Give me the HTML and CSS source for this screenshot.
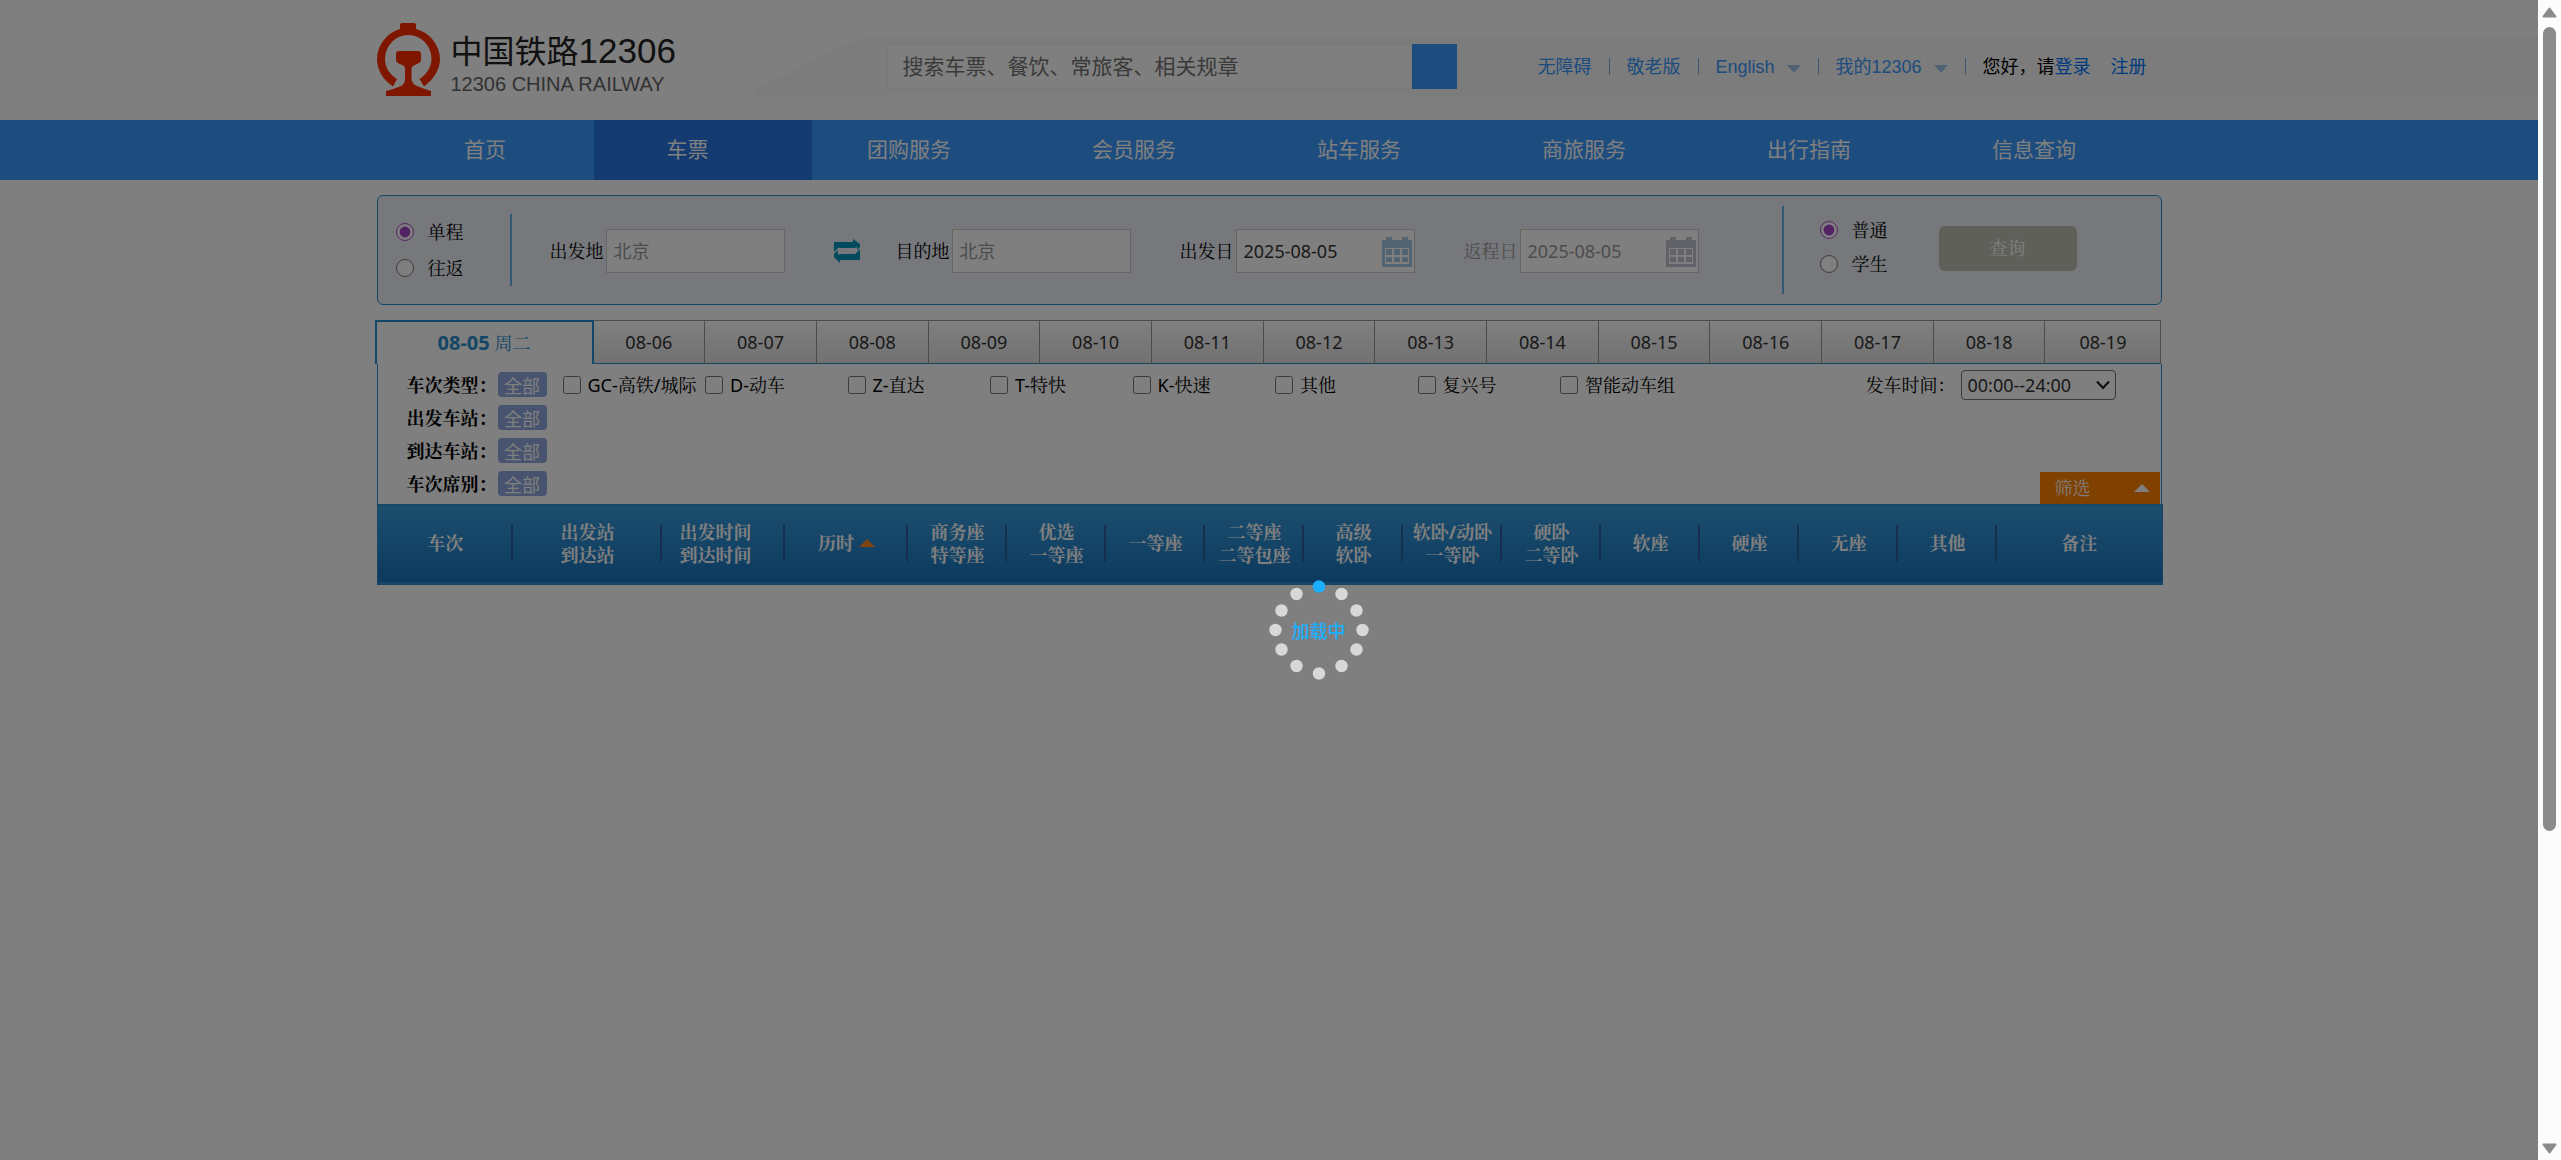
FILE: index.html
```html
<!DOCTYPE html>
<html lang="zh-CN">
<head>
<meta charset="utf-8">
<title>中国铁路12306</title>
<meta name="viewport" content="width=device-width, initial-scale=1">
<link rel="stylesheet" href="styles.css">
</head>
<body>
<div class="page">
  <header class="header">
    <svg class="header-wave" viewBox="0 0 150 60" preserveAspectRatio="none" aria-hidden="true"><path d="M150 0H138C118 0 97 4 75 17L28 42C14 48 4 50 0 58Q2 60 20 60H150Z"/></svg>
    <div class="header-band"></div>
    <div class="wrap header-row">
      <a class="logo" href="#">
        <svg class="logo-mark" viewBox="0 0 63 73" aria-hidden="true"><path d="M20 56L16 63.500C5 56 0 46 0 36A31.500 32 0 0 1 23 6V2Q23 0 25 0H37Q39 0 39 2V6A31.500 32 0 0 1 63 36C63 46 57 56 47 63.500L42.500 56C50 51 54.500 44 54.500 36A23.200 24 0 0 0 8 36C8 44 12 51 20 56ZM22 28H41Q44 28 44 31V37Q44 39 42 40L36 43Q34.500 44 34.500 46V56Q35 61 40 63Q47 66 54 68V73H9V68Q17 66 24 63Q28 61 28 56V46Q28 44 27 43L21 40Q19 39 19 37V31Q19 28 22 28Z"/></svg>
        <span class="logo-text"><span class="logo-name">中国铁路<span class="logo-num">12306</span></span><span class="logo-sub">12306 CHINA RAILWAY</span></span>
      </a>
      <form class="search">
        <input class="search-input" type="text" aria-label="搜索" placeholder="搜索车票、餐饮、常旅客、相关规章">
        <button class="search-btn" type="button" aria-label="搜索"></button>
      </form>
      <ul class="quick">
        <li><a href="#">无障碍</a></li>
        <li><a href="#">敬老版</a></li>
        <li><a href="#">English<i class="caret"></i></a></li>
        <li><a href="#">我的12306<i class="caret"></i></a></li>
        <li class="hello">您好，请<a class="login" href="#">登录</a><a class="login reg" href="#">注册</a></li>
      </ul>
    </div>
  </header>

  <nav class="nav">
    <div class="wrap nav-list">
      <a class="nav-home" href="#">首页</a>
      <a class="active" href="#">车票</a>
      <a href="#">团购服务</a>
      <a href="#">会员服务</a>
      <a href="#">站车服务</a>
      <a href="#">商旅服务</a>
      <a href="#">出行指南</a>
      <a href="#">信息查询</a>
    </div>
  </nav>

  <main class="wrap main">
    <form class="query">
      <div class="trip">
        <label><input type="radio" name="trip" checked>单程</label>
        <label><input type="radio" name="trip">往返</label>
      </div>
      <div class="fields">
        <div class="pair">
          <label class="field">出发地<input type="text" placeholder="北京"></label>
          <button class="swap" type="button" aria-label="交换出发地和目的地">
            <svg viewBox="0 0 26 24" aria-hidden="true"><path fill-rule="evenodd" d="M0 3H19V0L26 5V21H6V24L0 18ZM4 9V16L6 15H21L23 13V8L21 9Z"/><path class="gap" d="M0 13L5 8V10L0 15ZM26 10L21 15V13L26 8Z"/></svg>
          </button>
          <label class="field">目的地<input type="text" placeholder="北京"></label>
        </div>
        <label class="field date">出发日<input type="text" value="2025-08-05">
          <svg class="cal" viewBox="0 0 30 30" aria-hidden="true"><path fill-rule="evenodd" d="M0 3H4V0H10V3H20V0H26V3H30V30H0ZM3 11V27H27V11ZM4 12H10V18H4ZM12 12H18V18H12ZM20 12H26V18H20ZM4 20H10V25H4ZM12 20H18V25H12ZM20 20H26V25H20Z"/></svg>
        </label>
        <label class="field date off">返程日<input type="text" value="2025-08-05">
          <svg class="cal" viewBox="0 0 30 30" aria-hidden="true"><path fill-rule="evenodd" d="M0 3H4V0H10V3H20V0H26V3H30V30H0ZM3 11V27H27V11ZM4 12H10V18H4ZM12 12H18V18H12ZM20 12H26V18H20ZM4 20H10V25H4ZM12 20H18V25H12ZM20 20H26V25H20Z"/></svg>
        </label>
      </div>
      <div class="kind">
        <label><input type="radio" name="kind" checked>普通</label>
        <label><input type="radio" name="kind">学生</label>
      </div>
      <button class="query-btn" type="button">查询</button>
    </form>

    <div class="dates">
      <button class="current" type="button"><b>08-05</b> 周二</button>
      <button type="button">08-06</button>
      <button type="button">08-07</button>
      <button type="button">08-08</button>
      <button type="button">08-09</button>
      <button type="button">08-10</button>
      <button type="button">08-11</button>
      <button type="button">08-12</button>
      <button type="button">08-13</button>
      <button type="button">08-14</button>
      <button type="button">08-15</button>
      <button type="button">08-16</button>
      <button type="button">08-17</button>
      <button type="button">08-18</button>
      <button type="button">08-19</button>
    </div>

    <section class="filters">
      <div class="filter-row">
        <span class="filter-name">车次类型：</span><button class="all" type="button">全部</button>
        <div class="types">
          <label><input type="checkbox">GC-高铁/城际</label>
          <label><input type="checkbox">D-动车</label>
          <label><input type="checkbox">Z-直达</label>
          <label><input type="checkbox">T-特快</label>
          <label><input type="checkbox">K-快速</label>
          <label><input type="checkbox">其他</label>
          <label><input type="checkbox">复兴号</label>
          <label><input type="checkbox">智能动车组</label>
        </div>
        <label class="depart">发车时间：<select><option>00:00--24:00</option></select></label>
      </div>
      <div class="filter-row"><span class="filter-name">出发车站：</span><button class="all" type="button">全部</button></div>
      <div class="filter-row"><span class="filter-name">到达车站：</span><button class="all" type="button">全部</button></div>
      <div class="filter-row">
        <span class="filter-name">车次席别：</span><button class="all" type="button">全部</button>
        <button class="toggle" type="button">筛选<i class="up"></i></button>
      </div>
    </section>

    <table class="trains">
      <colgroup><col class="c-no"><col class="c-station"><col class="c-time" span="2"><col class="c-seat" span="11"><col class="c-note"></colgroup>
      <thead>
        <tr>
          <th>车次</th>
          <th>出发站<br>到达站</th>
          <th class="times">出发时间<br>到达时间</th>
          <th>历时<i class="up sort"></i></th>
          <th>商务座<br>特等座</th>
          <th>优选<br>一等座</th>
          <th>一等座</th>
          <th>二等座<br>二等包座</th>
          <th>高级<br>软卧</th>
          <th>软卧/动卧<br>一等卧</th>
          <th>硬卧<br>二等卧</th>
          <th>软座</th>
          <th>硬座</th>
          <th>无座</th>
          <th>其他</th>
          <th>备注</th>
        </tr>
      </thead>
    </table>
  </main>
</div>

<aside class="scroll" aria-hidden="true">
  <svg class="arrow" viewBox="0 0 15 11"><path d="M7.500 1.500L13.500 9.500H1.500Z"/></svg>
  <div class="track"><div class="thumb"></div></div>
  <svg class="arrow" viewBox="0 0 15 11"><path d="M7.500 9.500L13.500 1.500H1.500Z"/></svg>
</aside>

<div class="mask"></div>
<div class="loading" role="status">
  <svg viewBox="0 0 100 100" aria-hidden="true">
    <circle class="on" cx="50" cy="6.500" r="6.200"/>
    <circle cx="72.500" cy="14" r="6.200"/><circle cx="87.500" cy="30.500" r="6.200"/>
    <circle cx="93.500" cy="50" r="6.200"/><circle cx="87.500" cy="69.500" r="6.200"/>
    <circle cx="72.500" cy="86" r="6.200"/><circle cx="50" cy="93.500" r="6.200"/>
    <circle cx="27.500" cy="86" r="6.200"/><circle cx="12.500" cy="69.500" r="6.200"/>
    <circle cx="6.500" cy="50" r="6.200"/><circle cx="12.500" cy="30.500" r="6.200"/>
    <circle cx="27.500" cy="14" r="6.200"/>
  </svg>
  <span>加载中</span>
</div>
</body>
</html>
```

FILE: styles.css
```css
* { box-sizing: border-box; }

body {
  margin: 0;
  display: flex;
  min-height: 100vh;
  position: relative;
  background: #fff;
  color: #000;
  font: 18px/24px "Noto Sans", "Noto Serif CJK SC", "Noto Sans CJK SC", sans-serif;
}

button, input, select { font: inherit; color: inherit; margin: 0; }
button { border: 0; padding: 0; background: none; }
a { text-decoration: none; color: inherit; }
ul { margin: 0; padding: 0; list-style: none; }

.page { flex: 1; min-width: 0; }
.wrap { max-width: 1785px; margin: 0 auto; }

/* Header */
.header {
  position: relative;
  height: 120px;
  font-family: "Liberation Sans", "Noto Sans CJK SC", sans-serif;
}
.header-wave, .header-band { position: absolute; top: 36px; height: 60px; }
.header-wave { left: calc(50% - 517px); width: 150px; fill: #f8f8f8; }
.header-band { left: calc(50% - 367px); right: 0; background: #f8f8f8; }
.header-row { position: relative; display: flex; align-items: center; height: 100%; }

.logo { display: flex; gap: 11px; width: 510px; }
.logo-mark { width: 63px; height: 73px; fill: #ff2c00; }
.logo-text { display: flex; flex-direction: column; padding-top: 10px; white-space: nowrap; }
.logo-name { font-size: 32px; line-height: 36px; color: #222; }
.logo-num { font-size: 35px; }
.logo-sub { font-size: 20px; line-height: 28px; color: #666; }

.search { display: flex; height: 45px; margin-top: 13px; }
.search-input {
  width: 525px;
  padding: 0 15px;
  border: 1px solid #f0f0f0;
  background: #fff;
  font-size: 21px;
}
.search-input::placeholder { color: #757575; }
.search-btn { width: 45px; background: #3b99fc; }

.quick { display: flex; margin: 13px 0 0 81px; color: #000; white-space: nowrap; }
.quick li { display: flex; align-items: center; }
.quick li + li::before { content: ""; width: 1px; height: 17px; margin: 0 17px; background: #79aede; }
.quick a { color: #3b99fc; }
.quick .login { color: #0077ff; }
.quick .reg { margin-left: 20px; }
.caret {
  display: inline-block;
  margin-left: 12px;
  border: 7px solid transparent;
  border-top: 8px solid #9cc3ea;
  border-bottom: 0;
}

/* Main navigation */
.nav { background: #3b99fc; font-family: "Noto Sans CJK SC", sans-serif; }
.nav-list { display: grid; grid-template-columns: 217px 218px repeat(6, 1fr); }
.nav-list a {
  padding: 0 30px 4px 0;
  font-size: 21px;
  line-height: 56px;
  text-align: center;
  color: #fff;
}
.nav-list .nav-home { padding-right: 0; }
.nav-list .active { background: #2676e3; }

/* Query form */
.main { padding-top: 15px; }
.query {
  display: flex;
  align-items: center;
  height: 110px;
  border: 1px solid #298cce;
  border-radius: 6px;
  background: #eef1f8;
  white-space: nowrap;
}
.trip, .kind { display: flex; flex-direction: column; justify-content: center; }
.trip { width: 134px; height: 72px; gap: 12px; padding-left: 18px; border-right: 2px solid #62b3e4; }
.trip label, .kind label { display: flex; align-items: center; gap: 14px; }
.kind { width: 157px; height: 88px; gap: 10px; padding: 0 0 6px 36px; border-left: 2px solid #62b3e4; }
input[type="radio"], input[type="checkbox"] { width: 18px; height: 18px; accent-color: #a844c8; }
.fields { flex: 1; display: flex; gap: 49px; padding: 2px 0 0 38px; }
.pair { display: flex; align-items: center; }
.swap { padding: 0 36px 0 49px; }
.swap svg { display: block; width: 26px; height: 24px; fill: #0094bd; }
.swap .gap { fill: #eef1f8; }
.field { display: flex; align-items: center; gap: 2px; position: relative; }
.field input {
  width: 179px;
  height: 44px;
  padding: 0 7px;
  border: 1px solid #cfcdc7;
  background: #fff;
  color: #333;
  font-family: "Noto Sans", "Noto Sans CJK SC", sans-serif;
}
.field input::placeholder { color: #999; }
.cal { position: absolute; right: 3px; top: 8px; width: 30px; height: 30px; fill: #a5c8e4; }
.off, .off input { color: #999; }
.off .cal { fill: #c2c3d0; }
.query-btn {
  width: 138px;
  height: 45px;
  margin: 0 84px 4px 0;
  border-radius: 6px;
  background: #bfc0b5;
  color: #fff;
}

/* Date tabs */
.dates {
  display: grid;
  grid-template-columns: 219px repeat(13, 1fr) 116px;
  height: 44px;
  margin: 15px 0 0 -2px;
}
.dates button {
  border-top: 1px solid #999;
  border-right: 1px solid #999;
  border-bottom: 1px solid #298cce;
  background: linear-gradient(#fff, #e3e3e3);
  color: #333;
}
.dates .current {
  border: 2px solid #298cce;
  border-bottom: 0;
  background: #fff;
  color: #298cce;
}
.current b { font-size: 20px; }

/* Filters */
.filters {
  padding: 4px 1px 4px 29px;
  border: solid #298cce;
  border-width: 0 1px;
  white-space: nowrap;
}
.filter-row { display: flex; align-items: center; height: 33px; }
.filter-name { width: 91px; font-weight: bold; }
.all {
  width: 49px;
  height: 25px;
  border-radius: 4px;
  background: #90a8de;
  color: #fff;
  font-family: "Noto Sans CJK SC", sans-serif;
}
.types { display: grid; grid-template-columns: repeat(8, 1fr); width: 1140px; margin-left: 16px; }
.types label { display: flex; align-items: center; gap: 7px; }
.depart { display: flex; align-items: center; gap: 5px; margin: 0 44px 0 auto; }
.depart select {
  appearance: none;
  width: 155px;
  height: 30px;
  padding: 0 6px;
  border: 1px solid #767676;
  border-radius: 4px;
  background: #fff url("data:image/svg+xml,%3Csvg xmlns='http://www.w3.org/2000/svg' width='14' height='10'%3E%3Cpath d='M1 1.500L7 8L13 1.500' fill='none' stroke='%23222' stroke-width='2.200'/%3E%3C/svg%3E") right 5px center no-repeat;
  color: #333;
}
.toggle {
  display: flex;
  align-items: center;
  justify-content: space-between;
  align-self: flex-end;
  width: 120px;
  height: 32px;
  margin: 0 0 -4px auto;
  padding: 0 10px 0 15px;
  background: #ff8000;
  color: #fff;
}
.up {
  display: inline-block;
  border: 8px solid transparent;
  border-top: 0;
  border-bottom: 8px solid #fff;
}

/* Train table */
.trains {
  width: 100%;
  table-layout: fixed;
  border-collapse: collapse;
  background: linear-gradient(#389cdc, #1874be);
  border: solid #2f8cca;
  border-width: 2px 1px 3px;
}
.c-no { width: 136px; }
.c-station { width: 149px; }
.c-time { width: 123px; }
.c-seat { width: 99px; }
.c-note { width: 165px; }
.trains th {
  height: 78px;
  padding: 0;
  line-height: 23px;
  color: #fff;
  white-space: nowrap;
  background: linear-gradient(#2a5f9e, #2a5f9e) right center / 2px 37px no-repeat;
}
.trains .times { padding-right: 16px; }
.trains th:last-child { background: none; }
.sort { margin: 0 0 3px 5px; border-bottom-color: #ff8a20; }

/* Scroll rail */
.scroll {
  position: relative;
  z-index: 3;
  display: flex;
  flex-direction: column;
  align-items: center;
  width: 23px;
  padding: 7px 0 6px;
  background: #fcfcfc;
}
.arrow { width: 15px; height: 11px; fill: #8b8b8b; stroke: #8b8b8b; stroke-width: 2px; stroke-linejoin: round; }
.track { flex: 1; width: 13px; padding: 9px 0; }
.thumb { height: 72.6%; border-radius: 7px; background: #8b8b8b; }

/* Loading layer */
.mask { position: absolute; inset: 0; z-index: 1; background: rgba(0, 0, 0, 0.5); }
.loading {
  position: absolute;
  z-index: 2;
  top: 580px;
  left: calc(50% - 12px);
  display: grid;
  place-items: center;
  width: 100px;
  height: 100px;
  color: #1ab0ff;
  font-family: "Noto Sans CJK SC", sans-serif;
  font-weight: 500;
}
.loading svg, .loading span { grid-area: 1 / 1; }
.loading svg { width: 100px; height: 100px; fill: #d8d8d8; }
.loading .on { fill: #1ab0ff; }
```
